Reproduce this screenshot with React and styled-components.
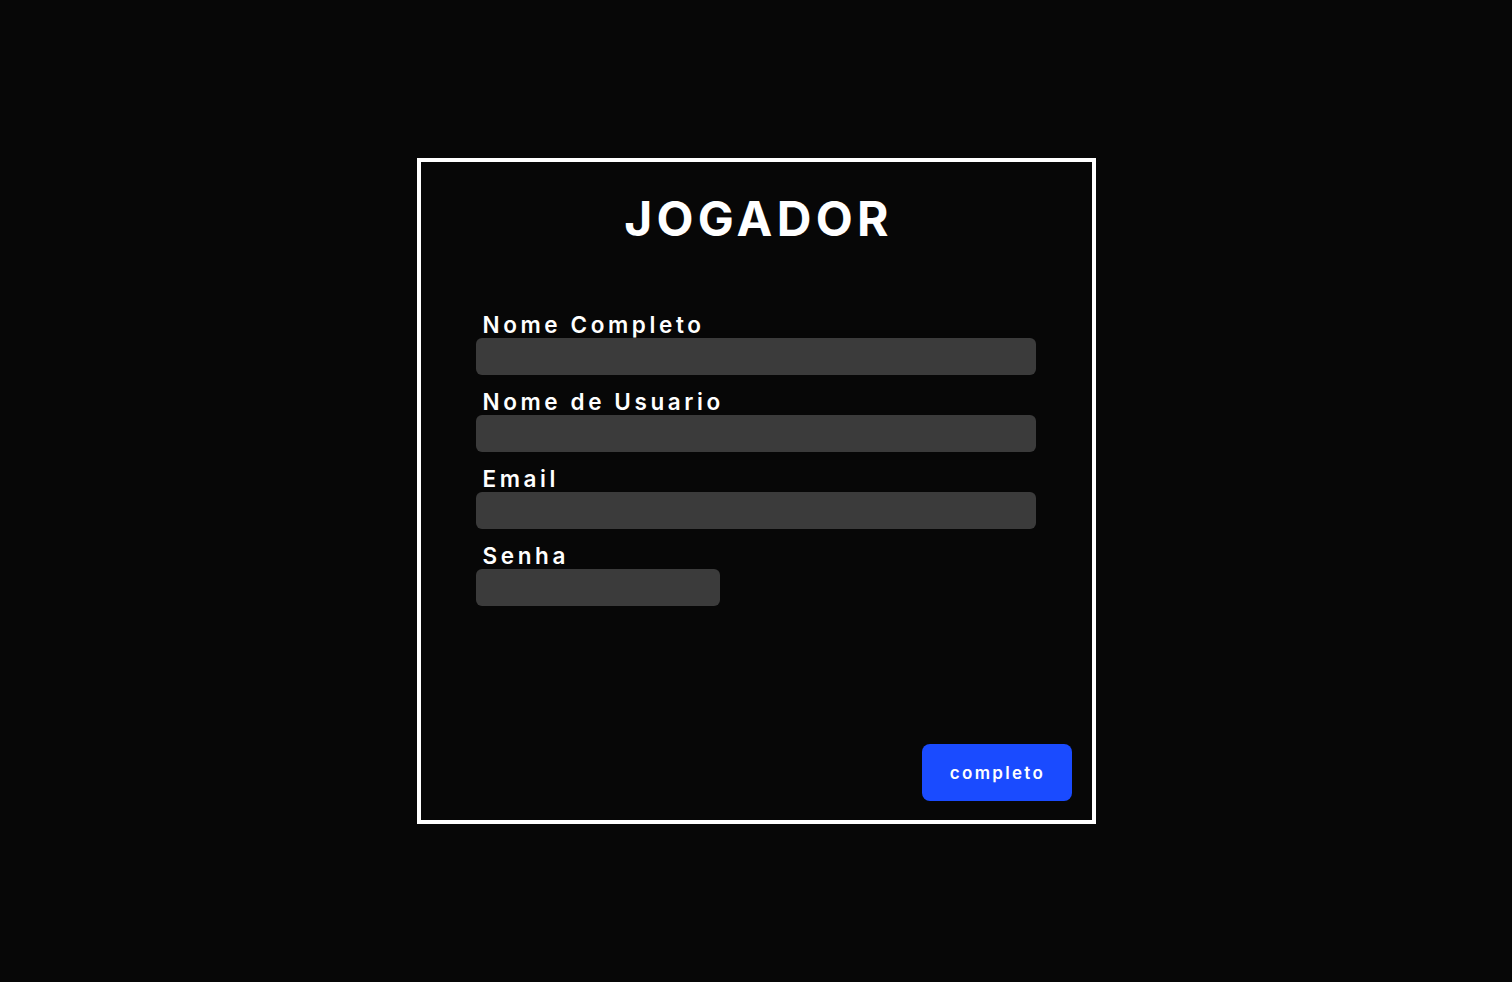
import React from "react";
import styled, { createGlobalStyle } from "styled-components";

const Global = createGlobalStyle`
  html, body { margin: 0; padding: 0; background: #070707; }
  body { font-family: Inter, "Noto Sans", sans-serif; color: #fff; }
  * { box-sizing: border-box; }
`;

const Page = styled.div`
  width: 100%;
  height: 982px;
  display: flex;
  align-items: center;
  justify-content: center;
`;

const Card = styled.div`
  width: 679px;
  height: 666px;
  border: 4px solid #ffffff;
  display: flex;
  flex-direction: column;
  padding: 27px 20px 19px 55px;
`;

const Title = styled.h1`
  margin: 0 30px 0 0;
  font-size: 48px;
  font-weight: 700;
  letter-spacing: 4.3px;
  text-align: center;
  line-height: normal;
`;

const Form = styled.form`
  display: flex;
  flex-direction: column;
  margin-top: 50px;
  width: 560px;
`;

const Label = styled.label`
  display: block;
  margin-top: 13px;
  padding-left: 7px;
  font-size: 22.5px;
  font-weight: 600;
  letter-spacing: 3.6px;
  line-height: 27px;
`;

const Input = styled.input`
  display: block;
  width: ${(p) => p.$w || 560}px;
  height: 37px;
  border: none;
  border-radius: 6px;
  background: #3b3b3b;
  outline: none;
  color: #fff;
  padding: 0 10px;
  font-family: inherit;
`;

const Footer = styled.div`
  margin-top: auto;
  display: flex;
  justify-content: flex-end;
`;

const Button = styled.button`
  width: 150px;
  height: 57px;
  border: none;
  border-radius: 8px;
  background: #1a4bff;
  color: #fff;
  font-family: Inter, sans-serif;
  font-size: 17px;
  font-weight: 600;
  letter-spacing: 2.3px;
  padding: 0 0 0 2px;
  cursor: pointer;
`;

const fields = [
  { label: "Nome Completo", type: "text" },
  { label: "Nome de Usuario", type: "text" },
  { label: "Email", type: "email" },
  { label: "Senha", type: "password", w: 244 },
];

export default function App() {
  return (
    <>
      <Global />
      <Page>
        <Card>
          <Title>JOGADOR</Title>
          <Form onSubmit={(e) => e.preventDefault()}>
            {fields.map((f) => (
              <React.Fragment key={f.label}>
                <Label>{f.label}</Label>
                <Input type={f.type} $w={f.w} />
              </React.Fragment>
            ))}
          </Form>
          <Footer>
            <Button type="button">completo</Button>
          </Footer>
        </Card>
      </Page>
    </>
  );
}
